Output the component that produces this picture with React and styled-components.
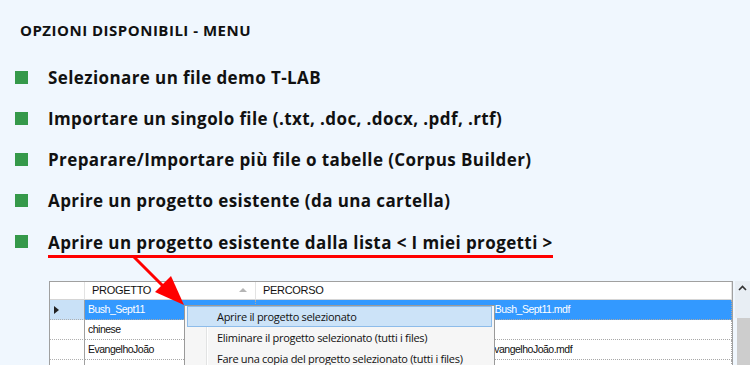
import React from "react";
import styled, { createGlobalStyle } from "styled-components";

const GlobalStyle = createGlobalStyle`
  html, body { margin: 0; padding: 0; background: #F0F7FE; }
  body { width: 750px; height: 365px; overflow: hidden; font-family: "Open Sans", "Noto Sans", sans-serif; }
  * { box-sizing: border-box; }
`;

const Page = styled.div`
  position: relative;
  width: 750px;
  height: 365px;
  overflow: hidden;
  padding-top: 20px;
  background: #F0F7FE;
`;

const Title = styled.h1`
  margin: 0 0 0 20px;
  font: 700 15px/20px "Open Sans", sans-serif;
  letter-spacing: 0.5px;
  color: #111;
`;

const OptionList = styled.ul`
  list-style: none;
  margin: 17px 0 0 15px;
  padding: 0;
  display: flex;
  flex-direction: column;
`;

const Option = styled.li`
  display: flex;
  align-items: center;
  height: 41px;
  gap: 20px;
`;

const Bullet = styled.span`
  width: 13px;
  height: 13px;
  background: #35994A;
  flex: none;
`;

const OptionText = styled.span`
  font: 700 17px/20px "Open Sans", sans-serif;
  letter-spacing: 0.4px;
  color: #111;
  ${(p) => p.$marked && `
    padding: 3px 0 2px 0;
    border-bottom: 3px solid #F00;
    margin-top: 4px;
  `}
`;

const GridArea = styled.div`
  margin-top: 19px;
  display: flex;
  align-items: stretch;
  height: 84px;
`;

const Table = styled.div`
  margin-left: 49px;
  width: 684px;
  display: grid;
  grid-template-columns: 35px 171px 1fr;
  grid-auto-rows: 20px;
  grid-template-rows: 18px;
  border-top: 1px solid #A0A0A0;
  border-left: 1px solid #A0A0A0;
  border-right: 1px solid #A0A0A0;
  background: #fff;
  font: 400 10.5px/1 "Liberation Sans", Arial, sans-serif;
  letter-spacing: -0.5px;
  color: #111;
`;

const HeadCell = styled.div`
  display: flex;
  align-items: center;
  padding-left: 7px;
  background: #fff;
  border-right: 1px solid #E3E3E3;
  border-bottom: 1px solid #D5D5D5;
  position: relative;
  font-size: 11px;
  letter-spacing: -0.3px;
`;

const SortMark = styled.span`
  position: absolute;
  right: 8px;
  top: 6px;
  width: 0;
  height: 0;
  border-left: 4px solid transparent;
  border-right: 4px solid transparent;
  border-bottom: 4px solid #B5B5B5;
`;

const SelectorCell = styled.div`
  display: flex;
  align-items: center;
  padding-left: 4px;
  border-right: 1px solid #A0A0A0;
  border-bottom: 1px dotted #B0B0B0;
  background: ${(p) => (p.$active ? "#C9E1F7" : "#fff")};
`;

const RowMarker = styled.span`
  width: 0;
  height: 0;
  border-top: 4px solid transparent;
  border-bottom: 4px solid transparent;
  border-left: 5px solid #222;
`;

const Cell = styled.div`
  display: flex;
  align-items: center;
  padding-left: 3px;
  white-space: nowrap;
  overflow: hidden;
  border-right: 1px dotted #A8A8A8;
  border-bottom: 1px dotted #A8A8A8;
  background: ${(p) => (p.$active ? "#3399FF" : "#fff")};
  color: ${(p) => (p.$active ? "#fff" : "#111")};
`;

const ScrollBar = styled.div`
  margin-left: 2px;
  width: 15px;
  display: flex;
  flex-direction: column;
`;

const ScrollUp = styled.div`
  height: 37px;
  background: #E8EEF4;
  display: flex;
  justify-content: center;
  padding-top: 4px;
`;

const ScrollThumb = styled.div`
  flex: 1;
  margin-left: 2px;
  background: #CDCDCD;
`;

const ContextMenu = styled.div`
  position: absolute;
  left: 184px;
  top: 305px;
  width: 311px;
  padding: 0 2px 1px;
  background: #F6F6F6;
  border: 1px solid #9A9A9A;
  font: 400 11px/1 "Open Sans", sans-serif;
  letter-spacing: -0.3px;
  color: #111;
  &::before {
    content: "";
    position: absolute;
    left: 21px;
    top: 1px;
    bottom: 0;
    width: 1px;
    background: #E2E3E3;
    box-shadow: 1px 0 0 #fff;
  }
`;

const MenuItem = styled.div`
  position: relative;
  height: 21px;
  display: flex;
  align-items: center;
  padding-left: 29px;
  border: 1px solid ${(p) => (p.$hot ? "#8DBCEA" : "transparent")};
  background: ${(p) => (p.$hot ? "#CCE3F8" : "transparent")};
  z-index: 1;
`;

const ArrowLayer = styled.svg`
  position: absolute;
  left: 0;
  top: 0;
  pointer-events: none;
`;

const options = [
  "Selezionare un file demo T-LAB",
  "Importare un singolo file (.txt, .doc, .docx, .pdf, .rtf)",
  "Preparare/Importare più file o tabelle (Corpus Builder)",
  "Aprire un progetto esistente (da una cartella)",
];

const rows = [
  { name: "Bush_Sept11", path: "C:\\Users\\Documenti\\T-LAB PRO\\Projects\\Bush_Sept11\\Bush_Sept11.mdf", active: true },
  { name: "chinese", path: "C:\\Users\\Documenti\\chinese.mdf" },
  { name: "EvangelhoJoão", path: "C:\\Users\\Documenti\\T-LAB PRO\\Projects\\Evangelhos\\EvangelhoJoão.mdf" },
  { name: "", path: "" },
];

export default function App() {
  return (
    <Page>
      <GlobalStyle />
      <Title>OPZIONI DISPONIBILI - MENU</Title>
      <OptionList>
        {options.map((o) => (
          <Option key={o}>
            <Bullet />
            <OptionText>{o}</OptionText>
          </Option>
        ))}
        <Option>
          <Bullet />
          <OptionText $marked>Aprire un progetto esistente dalla lista &lt; I miei progetti &gt;</OptionText>
        </Option>
      </OptionList>
      <GridArea>
        <Table>
          <HeadCell />
          <HeadCell>
            PROGETTO
            <SortMark />
          </HeadCell>
          <HeadCell>PERCORSO</HeadCell>
          {rows.map((r, i) => (
            <React.Fragment key={i}>
              <SelectorCell $active={r.active}>{r.active && <RowMarker />}</SelectorCell>
              <Cell $active={r.active}>{r.name}</Cell>
              <Cell $active={r.active}>{r.path}</Cell>
            </React.Fragment>
          ))}
        </Table>
        <ScrollBar>
          <ScrollUp>
            <svg width="9" height="6" viewBox="0 0 9 6">
              <path d="M1 5 L4.5 1.5 L8 5" fill="none" stroke="#333" strokeWidth="1.6" />
            </svg>
          </ScrollUp>
          <ScrollThumb />
        </ScrollBar>
      </GridArea>
      <ContextMenu>
        <MenuItem $hot>Aprire il progetto selezionato</MenuItem>
        <MenuItem>Eliminare il progetto selezionato (tutti i files)</MenuItem>
        <MenuItem>Fare una copia del progetto selezionato (tutti i files)</MenuItem>
      </ContextMenu>
      <ArrowLayer width="750" height="365" viewBox="0 0 750 365">
        <line x1="133" y1="256" x2="166" y2="289" stroke="#F00" strokeWidth="3" />
        <polygon points="184,305 155,292 171,276" fill="#F00" />
      </ArrowLayer>
    </Page>
  );
}
